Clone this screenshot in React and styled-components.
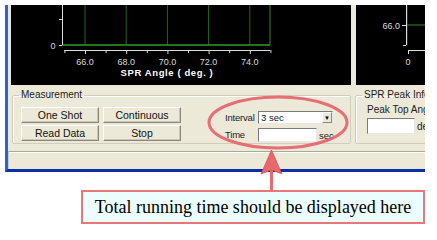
import React from 'react'
import styled, { createGlobalStyle } from 'styled-components'

const GlobalStyle = createGlobalStyle`
  html, body {
    margin: 0;
    padding: 0;
    background: #fff;
  }
  body {
    font-family: "Liberation Sans", Arial, sans-serif;
  }
`

const Stage = styled.div`
  position: relative;
  width: 437px;
  height: 232px;
  overflow: hidden;
  background: #fff;
  padding-top: 5px;
  box-sizing: border-box;
`
const Window = styled.div`
  margin-left: 5px;
  width: 417px;
  height: 164px;
  background: #ece9d8;
  border-left: 3px solid #2f62d6;
  border-bottom: 3px solid #0b2fa6;
  display: flex;
  flex-direction: column;
  overflow: hidden;
`
const ChartRow = styled.div`
  display: flex;
  gap: 5px;
  height: 80px;
  padding-left: 3px;
`
const ChartPanel = styled.div`
  background: #000;
  height: 80px;
  width: ${props => props.$width || 'auto'};
  flex: ${props => (props.$width ? 'none' : '1')};
  overflow: hidden;
`
const ControlsRow = styled.div`
  display: flex;
  gap: 4px;
  height: 66px;
  padding-left: 4px;
  box-sizing: border-box;
`
const Group = styled.fieldset`
  margin: 4px 0 0 0;
  padding: 0 0 0 8px;
  height: 55px;
  box-sizing: border-box;
  width: ${props => props.$width};
  flex: none;
  border: 1px solid #d0cdbd;
  border-radius: 2px;
  box-shadow: inset 1px 1px 0 #fff;
  display: flex;
  align-items: flex-start;
`
const Legend = styled.legend`
  padding: 0 2px;
  margin-left: -2px;
  font-size: 10px;
  line-height: 12px;
  color: #222;
`
const ButtonGrid = styled.div`
  display: grid;
  grid-template-columns: 78px 78px;
  grid-auto-rows: 16px;
  column-gap: 4px;
  row-gap: 2px;
  margin-top: 6px;
`
const Button = styled.button`
  font-family: "Liberation Sans", Arial, sans-serif;
  font-size: 10.5px;
  color: #111;
  padding: 0;
  background: #ece9d8;
  border: 1px solid;
  border-color: #fff #8a8777 #8a8777 #fff;
  box-shadow: inset -1px -1px 0 #c9c6b6;
  cursor: pointer;
`
const FieldGrid = styled.div`
  display: grid;
  grid-template-columns: 33px auto;
  row-gap: 4px;
  align-items: center;
  margin-left: 44px;
  margin-top: 10px;
  font-size: 9.5px;
  color: #222;
`
const FieldLabel = styled.span`
  line-height: 12px;
  white-space: nowrap;
  letter-spacing: -0.2px;
`
const Select = styled.div`
  width: 75px;
  height: 13px;
  box-sizing: border-box;
  background: #fff;
  border: 1px solid;
  border-color: #7a7a7a #e8e8e8 #e8e8e8 #7a7a7a;
  display: flex;
  align-items: center;
  justify-content: space-between;
  padding-left: 2px;
  font-size: 9.5px;
  color: #111;
`
const SelectArrow = styled.span`
  width: 10px;
  height: 11px;
  box-sizing: border-box;
  background: #ece9d8;
  border: 1px solid;
  border-color: #fff #8a8777 #8a8777 #fff;
  display: flex;
  align-items: center;
  justify-content: center;
  font-size: 6px;
  color: #000;
`
const InputRow = styled.div`
  display: flex;
  align-items: center;
  gap: 2px;
  white-space: nowrap;
`
const TextBox = styled.div`
  flex: none;
  width: ${props => props.$width};
  height: ${props => props.$height};
  box-sizing: border-box;
  background: #fff;
  border: 1px solid;
  border-color: #7a7a7a #e8e8e8 #e8e8e8 #7a7a7a;
`
const PeakBody = styled.div`
  display: flex;
  flex-direction: column;
  margin-top: 3px;
  margin-left: 3px;
  gap: 3px;
  font-size: 10px;
  color: #222;
  white-space: nowrap;
`
const StatusBar = styled.div`
  flex: 1;
  border-top: 1px solid #aca899;
  box-shadow: inset 0 1px 0 #fff;
  border-left: 1px solid #cfcbbb;
`
const Callout = styled.div`
  margin: 18px 0 0 81px;
  width: 344px;
  height: 34px;
  box-sizing: border-box;
  border: 2px solid #e87878;
  background: #ebfdfd;
  display: flex;
  align-items: center;
  justify-content: center;
  font-family: "Liberation Serif", "Times New Roman", serif;
  font-size: 18px;
  color: #000;
  white-space: nowrap;
`
const Overlay = styled.svg`
  position: absolute;
  left: 0;
  top: 0;
  pointer-events: none;
`

const px = deg => 64.4 + (deg - 65) * 20.6 - 11

const AngleChart = () => {
  const majors = [66, 68, 70, 72, 74]
  const minors = [65, 66, 67, 68, 69, 70, 71, 72, 73, 74, 75]
  return (
    <svg width="340" height="80">
      {majors.map(d => (
        <line key={d} x1={px(d)} y1="0" x2={px(d)} y2="40" stroke="#1f6b1f" strokeWidth="1" />
      ))}
      <line x1="259" y1="0" x2="259" y2="40" stroke="#2b8a2b" />
      <line x1="51" y1="40" x2="259" y2="40" stroke="#2f9a2f" strokeWidth="1.5" />
      <line x1="51.5" y1="0" x2="51.5" y2="40" stroke="#ddd" />
      <line x1="48" y1="14.5" x2="51" y2="14.5" stroke="#ddd" />
      <line x1="48" y1="40.5" x2="51" y2="40.5" stroke="#ddd" />
      <text x="42" y="43.5" fill="#ddd" fontSize="9" textAnchor="middle" fontFamily="Liberation Sans, sans-serif">0</text>
      <line x1={px(65)} y1="45.5" x2="259" y2="45.5" stroke="#ddd" />
      {minors.map(d => (
        <line key={d} x1={px(d) + 0.5} y1="45" x2={px(d) + 0.5} y2={d % 2 === 0 ? 49 : 48} stroke="#ddd" />
      ))}
      {majors.map(d => (
        <text key={d} x={px(d)} y="59.5" fill="#ddd" fontSize="9" textAnchor="middle" fontFamily="Liberation Sans, sans-serif">
          {d.toFixed(1)}
        </text>
      ))}
      <text x="156" y="71" fill="#fff" fontSize="9.5" fontWeight="bold" textAnchor="middle" letterSpacing="0.6" fontFamily="Liberation Sans, sans-serif">
        SPR Angle ( deg. )
      </text>
    </svg>
  )
}

const TimeChart = () => (
  <svg width="69" height="80">
    <line x1="51" y1="0" x2="51" y2="40" stroke="#1f6b1f" />
    <line x1="50" y1="20" x2="69" y2="20" stroke="#2b8a2b" />
    <line x1="50.5" y1="0" x2="50.5" y2="40" stroke="#ddd" />
    <line x1="46" y1="20.5" x2="50" y2="20.5" stroke="#ddd" />
    <line x1="47" y1="40.5" x2="50" y2="40.5" stroke="#ddd" />
    <text x="44" y="23.5" fill="#ddd" fontSize="9" textAnchor="end" fontFamily="Liberation Sans, sans-serif">66.0</text>
    <line x1="52" y1="45.5" x2="69" y2="45.5" stroke="#ddd" />
    <line x1="52.5" y1="45" x2="52.5" y2="49" stroke="#ddd" />
    <text x="52" y="59.5" fill="#ddd" fontSize="9" textAnchor="middle" fontFamily="Liberation Sans, sans-serif">0</text>
  </svg>
)

const Annotation = () => (
  <Overlay width="437" height="232">
    <ellipse cx="278" cy="122.5" rx="69" ry="25.5" fill="none" stroke="#e5646a" strokeWidth="3" opacity="0.92" />
    <rect x="270" y="168" width="3" height="22" fill="#e86a6a" />
    <polygon points="271.5,150 282,174 271.5,170 261,174" fill="#e8686b" stroke="#c94f55" strokeWidth="0.7" />
  </Overlay>
)

const App = () => (
  <Stage>
    <GlobalStyle />
    <Window>
      <ChartRow>
        <ChartPanel $width="340px">
          <AngleChart />
        </ChartPanel>
        <ChartPanel>
          <TimeChart />
        </ChartPanel>
      </ChartRow>
      <ControlsRow>
        <Group $width="339px">
          <Legend>Measurement</Legend>
          <ButtonGrid>
            <Button>One Shot</Button>
            <Button>Continuous</Button>
            <Button>Read Data</Button>
            <Button>Stop</Button>
          </ButtonGrid>
          <FieldGrid>
            <FieldLabel>Interval</FieldLabel>
            <Select>
              3 sec
              <SelectArrow>▼</SelectArrow>
            </Select>
            <FieldLabel>Time</FieldLabel>
            <InputRow>
              <TextBox $width="59px" $height="14px" />
              sec
            </InputRow>
          </FieldGrid>
        </Group>
        <Group $width="120px">
          <Legend>SPR Peak Info.</Legend>
          <PeakBody>
            <span>Peak Top Angle</span>
            <InputRow>
              <TextBox $width="48px" $height="16px" />
              deg.
            </InputRow>
          </PeakBody>
        </Group>
      </ControlsRow>
      <StatusBar />
    </Window>
    <Callout>Total running time should be displayed here</Callout>
    <Annotation />
  </Stage>
)

export default App
